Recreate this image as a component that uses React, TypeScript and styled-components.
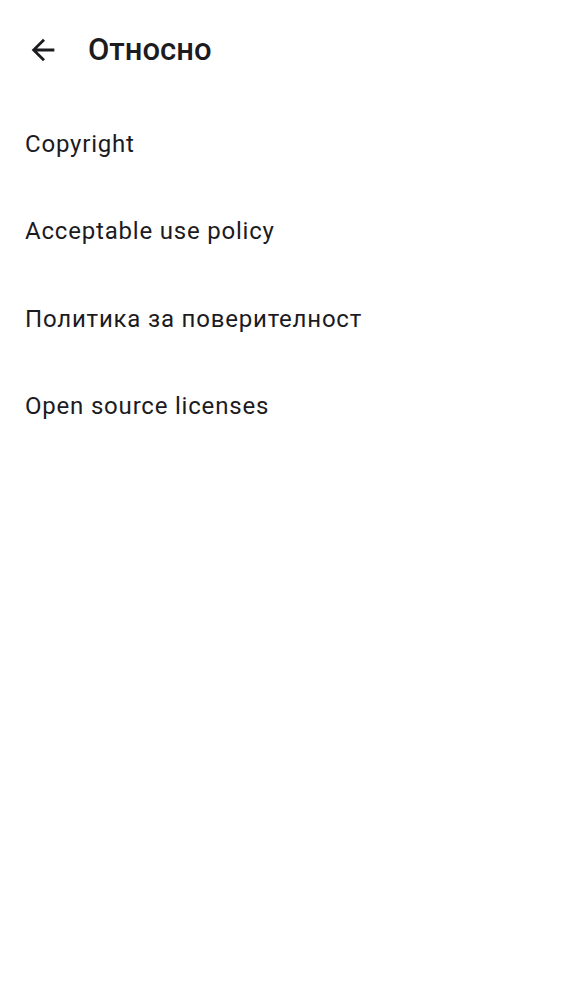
import React from "react";
import styled, { createGlobalStyle } from "styled-components";

const Global = createGlobalStyle`
  html, body { margin: 0; padding: 0; background: #ffffff; }
  body { font-family: Roboto, "Noto Sans", sans-serif; -webkit-font-smoothing: antialiased; }
`;

const Page = styled.div`
  width: 562px;
  min-height: 1000px;
  background: #ffffff;
  display: flex;
  flex-direction: column;
`;

const TopBar = styled.header`
  height: 100px;
  display: flex;
  align-items: center;
  padding-left: 26px;
  gap: 28px;
`;

const BackButton = styled.button`
  width: 34px;
  height: 34px;
  padding: 0;
  border: none;
  background: transparent;
  display: flex;
  align-items: center;
  justify-content: center;
  color: #1c1b1f;
`;

const Title = styled.h1`
  margin: 0 0 2px 0;
  font-size: 31px;
  font-weight: 500;
  color: #1c1b1f;
  letter-spacing: 0;
`;

const List = styled.nav`
  display: flex;
  flex-direction: column;
`;

const Item = styled.div`
  height: 87.5px;
  display: flex;
  align-items: center;
  padding-left: 25px;
  font-size: 24px;
  font-weight: 400;
  letter-spacing: 0.8px;
  color: #1c1b1f;
`;

const items = [
  "Copyright",
  "Acceptable use policy",
  "Политика за поверителност",
  "Open source licenses",
];

export default function App() {
  return (
    <Page>
      <Global />
      <TopBar>
        <BackButton aria-label="Назад">
          <svg width="34" height="34" viewBox="0 0 24 24" fill="currentColor">
            <path d="M20 11H7.83l5.59-5.59L12 4l-8 8 8 8 1.41-1.41L7.83 13H20v-2z" />
          </svg>
        </BackButton>
        <Title>Относно</Title>
      </TopBar>
      <List>
        {items.map((t) => (
          <Item key={t}>{t}</Item>
        ))}
      </List>
    </Page>
  );
}
